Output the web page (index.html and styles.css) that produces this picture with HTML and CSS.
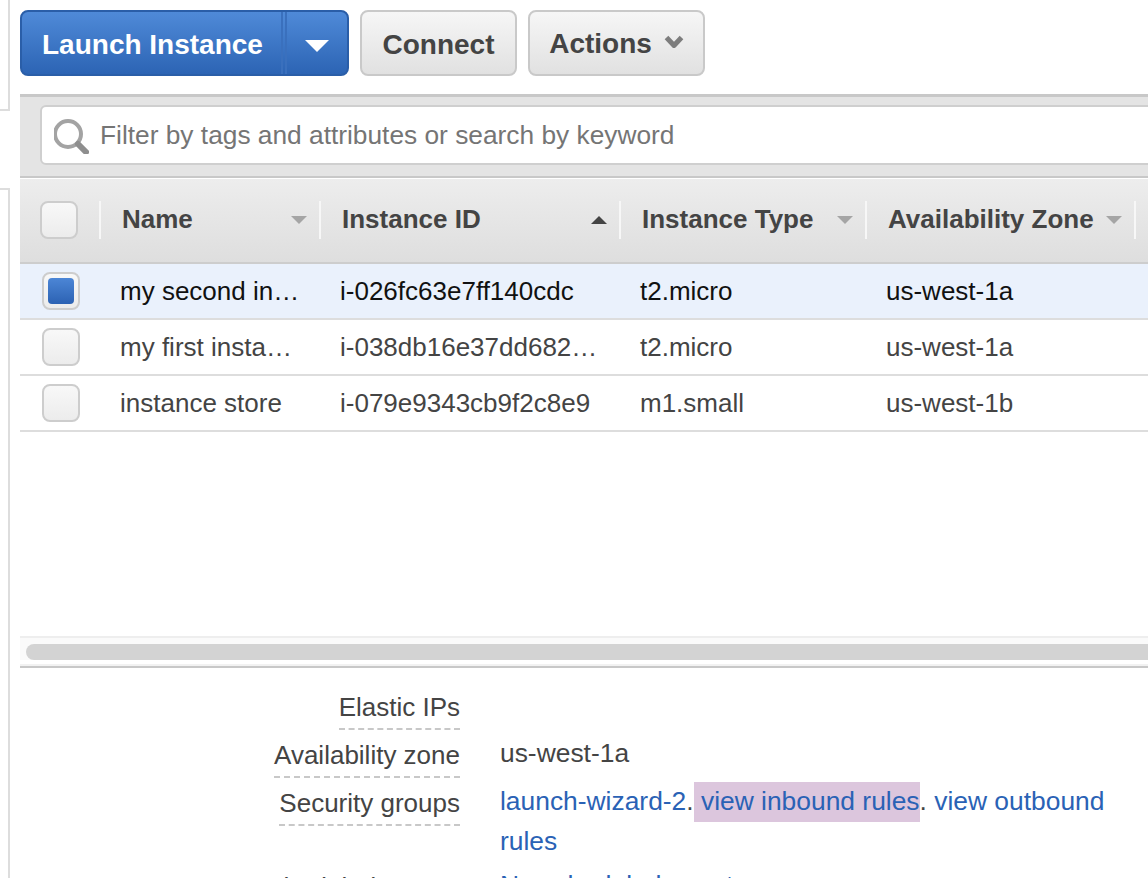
FILE: index.html
```html
<!DOCTYPE html>
<html lang="en">
<head>
    <meta charset="UTF-8">
    <title>Instances</title>
    <link rel="stylesheet" href="styles.css">
</head>
<body>
    <div class="page">
        <div class="side">
            <div class="side-top"></div>
            <div class="side-bottom"></div>
        </div>
        <div class="main">
            <div class="toolbar">
                <div class="btn-launch">
                    <span class="btn-launch-label">Launch Instance</span>
                    <span class="btn-launch-arrow"><i class="tri-white"></i></span>
                </div>
                <div class="btn btn-connect">Connect</div>
                <div class="btn btn-actions">Actions
                    <svg class="chevron" width="20" height="15" viewBox="0 0 20 15"><path d="M2.5 3.5L10 11.5l7.5-8" fill="none" stroke="#7d7d7d" stroke-width="5" stroke-linejoin="round"/></svg>
                </div>
            </div>
            <div class="filter-bar">
                <div class="filter-input">
                    <svg class="search-icon" width="38" height="38" viewBox="0 0 38 38"><circle cx="14" cy="18" r="13" fill="none" stroke="#a3a3a3" stroke-width="4"/><path d="M24 28l8 8" stroke="#8e8e8e" stroke-width="6" stroke-linecap="round"/></svg>
                    <span>Filter by tags and attributes or search by keyword</span>
                </div>
            </div>
            <div class="table-head">
                <div class="cell-check cell-check-head"><span class="check check-head"></span></div>
                <div class="th th-name">Name<i class="tri-down"></i></div>
                <div class="th th-id">Instance ID<i class="tri-up"></i></div>
                <div class="th th-type">Instance Type<i class="tri-down"></i></div>
                <div class="th th-zone">Availability Zone<i class="tri-down"></i></div>
            </div>
            <div class="row row-selected">
                <div class="cell-check"><span class="check"><i class="check-on"></i></span></div>
                <div class="td td-name">my second in…</div>
                <div class="td td-id">i-026fc63e7ff140cdc</div>
                <div class="td td-type">t2.micro</div>
                <div class="td td-zone">us-west-1a</div>
            </div>
            <div class="row">
                <div class="cell-check"><span class="check"></span></div>
                <div class="td td-name">my first insta…</div>
                <div class="td td-id">i-038db16e37dd682…</div>
                <div class="td td-type">t2.micro</div>
                <div class="td td-zone">us-west-1a</div>
            </div>
            <div class="row">
                <div class="cell-check"><span class="check"></span></div>
                <div class="td td-name">instance store</div>
                <div class="td td-id">i-079e9343cb9f2c8e9</div>
                <div class="td td-type">m1.small</div>
                <div class="td td-zone">us-west-1b</div>
            </div>
            <div class="table-space"></div>
            <div class="scroll-track"><div class="scroll-thumb"></div></div>
            <div class="details">
                <div class="detail">
                    <div class="detail-label"><span>Elastic IPs</span></div>
                    <div class="detail-value"></div>
                </div>
                <div class="detail">
                    <div class="detail-label"><span>Availability zone</span></div>
                    <div class="detail-value">us-west-1a</div>
                </div>
                <div class="detail detail-tall">
                    <div class="detail-label"><span>Security groups</span></div>
                    <div class="detail-value"><a href="#">launch-wizard-2</a>.<a href="#" class="marked"> view inbound rules</a>. <a href="#">view outbound rules</a></div>
                </div>
                <div class="detail">
                    <div class="detail-label"><span>Scheduled events</span></div>
                    <div class="detail-value"><a href="#">No scheduled events</a></div>
                </div>
            </div>
        </div>
    </div>
</body>
</html>
```

FILE: styles.css
```css
*{
    margin: 0;
    padding: 0;
    box-sizing: border-box;
}
html,body{
    height: 878px;
    overflow: hidden;
    background: #fff;
}
body{
    font-family: "Liberation Sans", Arial, sans-serif;
    font-size: 26px;
    color: #444;
}
.page{
    display: flex;
    height: 878px;
    overflow: hidden;
}
.side{
    width: 20px;
    flex: none;
}
.side-top{
    width: 10px;
    height: 111px;
    border-right: 2px solid #ddd;
    border-bottom: 2px solid #ddd;
}
.side-bottom{
    width: 10px;
    height: 700px;
    margin-top: 77px;
    border-right: 2px solid #ddd;
    border-top: 2px solid #ddd;
}
.main{
    width: 1128px;
    flex: none;
    overflow: hidden;
}

/* buttons */
.toolbar{
    display: flex;
    gap: 11px;
    padding-top: 10px;
    height: 94px;
}
.btn-launch{
    display: flex;
    width: 329px;
    height: 66px;
    border: 2px solid #2a5ea8;
    border-radius: 8px;
    background: linear-gradient(#4f8ad8,#2c64b4);
    color: #fff;
    font-weight: bold;
    font-size: 28px;
}
.btn-launch-label{
    width: 261px;
    line-height: 65px;
    padding-left: 20px;
    border-right: 2px solid #3a70bd;
    white-space: nowrap;
}
.btn-launch-arrow{
    flex: 1;
    display: flex;
    align-items: center;
    justify-content: center;
    border-left: 2px solid #3a70bd;
    margin-left: 2px;
}
.btn{
    height: 66px;
    border: 2px solid #c9c9c9;
    border-radius: 8px;
    background: linear-gradient(#f6f6f6,#e1e1e1);
    color: #444;
    font-weight: bold;
    font-size: 28px;
    line-height: 65px;
    text-align: center;
}
.btn-connect{
    width: 157px;
}
.btn-actions{
    width: 177px;
    display: flex;
    align-items: center;
    justify-content: center;
    gap: 12px;
    padding-top: 1px;
}
.chevron{
    margin-top: -4px;
    filter: blur(.5px);
}
.tri-white{
    margin-top: 5px;
    border-left: 12px solid transparent;
    border-right: 12px solid transparent;
    border-top: 12px solid #fff;
}

/* filter */
.filter-bar{
    height: 84px;
    padding: 8px 0 0 20px;
    background: #e4e4e4;
    border-top: 3px solid #c8c8c8;
    border-bottom: 2px solid #c8c8c8;
}
.filter-input{
    display: flex;
    align-items: center;
    width: 1200px;
    height: 60px;
    padding-left: 12px;
    background: #fff;
    border: 2px solid #cfcfcf;
    border-radius: 6px;
    color: #757575;
    font-size: 26.3px;
}
.search-icon{
    flex: none;
    margin-right: 8px;
    filter: blur(.5px);
}

/* table */
.table-head,.row{
    display: flex;
    align-items: center;
    width: 1300px;
}
.table-head{
    height: 85px;
    margin-top: 1px;
    background: linear-gradient(#ededed,#dedede);
    border-bottom: 2px solid #cdcdcd;
    padding-bottom: 2px;
    font-weight: bold;
    color: #444;
}
.row{
    height: 56px;
    border-bottom: 2px solid #ddd;
}
.row-selected{
    background: #eaf1fc;
    color: #111;
}
.cell-check{
    width: 80px;
    flex: none;
}
.cell-check-head{
    width: 79px;
}
.check{
    display: flex;
    align-items: center;
    justify-content: center;
    width: 38px;
    height: 38px;
    margin-left: 22px;
    background: linear-gradient(#f8f8f8,#ececec);
    border: 2px solid #cdcdcd;
    border-radius: 8px;
}
.check-head{
    margin-left: 20px;
}
.check-on{
    width: 26px;
    height: 26px;
    border-radius: 4px;
    background: linear-gradient(#4c86d6,#2c62b3);
}
.th{
    display: flex;
    align-items: center;
    justify-content: space-between;
    height: 38px;
    padding: 0 12px 0 21px;
    border-left: 2px solid #f7f7f7;
    flex: none;
    white-space: nowrap;
}
.td{
    padding-left: 20px;
    flex: none;
    white-space: nowrap;
}
.th-name,.td-name{
    width: 220px;
}
.th-id,.td-id{
    width: 300px;
}
.th-type,.td-type{
    width: 246px;
}
.th-zone,.td-zone{
    width: 271px;
    border-right: 2px solid #f7f7f7;
}
.td-zone{
    border-right: 0;
}
.tri-down{
    border-left: 8px solid transparent;
    border-right: 8px solid transparent;
    border-top: 8px solid #a5a5a5;
}
.tri-up{
    border-left: 8px solid transparent;
    border-right: 8px solid transparent;
    border-bottom: 8px solid #444;
}
.table-space{
    height: 204px;
}
.scroll-track{
    height: 32px;
    padding: 6px 0 0 6px;
    background: linear-gradient(#fafafa 22px,#fff 22px);
    border-top: 2px solid #eee;
    border-bottom: 2px solid #c8c8c8;
    box-shadow: inset 0 -2px #f2f2f2;
}
.scroll-thumb{
    width: 1200px;
    height: 16px;
    border-radius: 8px;
    background: #d3d3d3;
}

/* details */
.details{
    padding-top: 17px;
}
.detail{
    display: flex;
    min-height: 48px;
}
.detail-tall{
    padding-bottom: 4px;
}
.detail-label{
    width: 440px;
    flex: none;
    text-align: right;
}
.detail-label span{
    display: inline-block;
    height: 45px;
    line-height: 44px;
    border-bottom: 2px dashed #c8c8c8;
}
.detail-value{
    width: 620px;
    margin-left: 40px;
    line-height: 40px;
    font-size: 26.4px;
}
.detail-value a{
    color: #2a62b5;
    text-decoration: none;
}
.detail-value .marked{
    background: #dcc6dd;
    padding: 4px 0 6px;
}
```
